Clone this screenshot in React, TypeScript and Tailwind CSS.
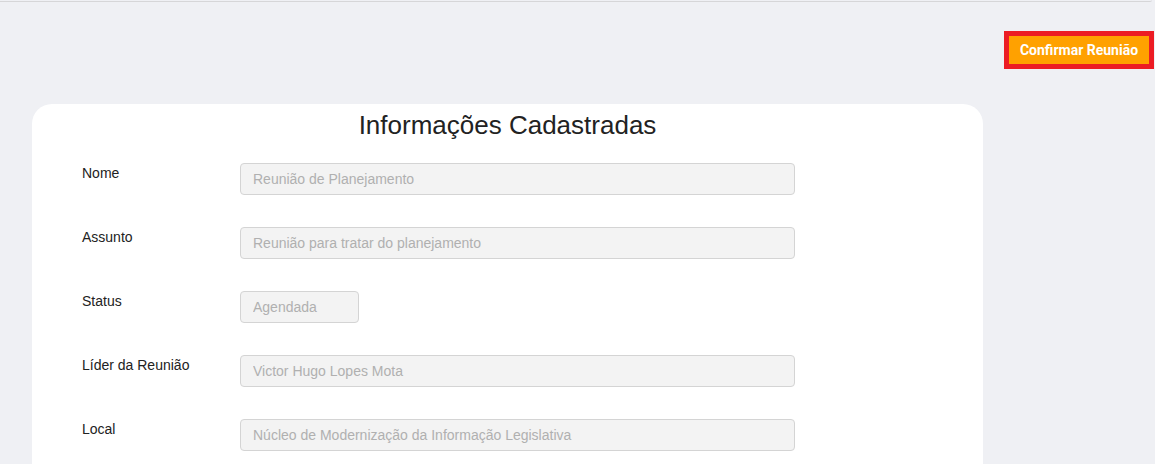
const rows = [
  { label: "Nome", value: "Reunião de Planejamento", w: "w-[555px]" },
  { label: "Assunto", value: "Reunião para tratar do planejamento", w: "w-[555px]" },
  { label: "Status", value: "Agendada", w: "w-[119px]" },
  { label: "Líder da Reunião", value: "Victor Hugo Lopes Mota", w: "w-[555px]" },
  { label: "Local", value: "Núcleo de Modernização da Informação Legislativa", w: "w-[555px]" },
];

export default function App() {
  return (
    <div className="min-h-[464px] bg-[#eff0f4] font-['Liberation_Sans',Arial,sans-serif] text-[#222]">
      {/* header strip */}
      <div className="h-[2px] w-[1152px] border-b border-[#d6d6d8] rounded-br" />

      <div className="flex justify-end pt-[29px] pr-[1px]">
        <div className="border-[5px] border-[#ec1c24] bg-[#ec1c24]">
          <button className="h-[28px] w-[140px] bg-[#ffa100] font-['Roboto',sans-serif] text-[14px] font-bold text-white">
            Confirmar Reunião
          </button>
        </div>
      </div>

      <div className="ml-[32px] mt-[35px] w-[951px] rounded-t-[20px] bg-white pb-10">
        <h2 className="pt-[4px] text-center text-[26px] leading-[34px]">Informações Cadastradas</h2>
        <div className="mt-[21px] flex flex-col gap-8 pl-[50px]">
          {rows.map((r) => (
            <div key={r.label} className="flex items-start">
              <label className="w-[158px] pt-[1px] text-[14px] leading-[18px]">{r.label}</label>
              <input
                readOnly
                placeholder={r.value}
                className={`${r.w} h-[32px] rounded border border-[#d4d4d4] bg-[#f3f3f3] px-3 text-[14px] placeholder:text-[#b0b0b0] outline-none`}
              />
            </div>
          ))}
        </div>
      </div>
    </div>
  );
}
